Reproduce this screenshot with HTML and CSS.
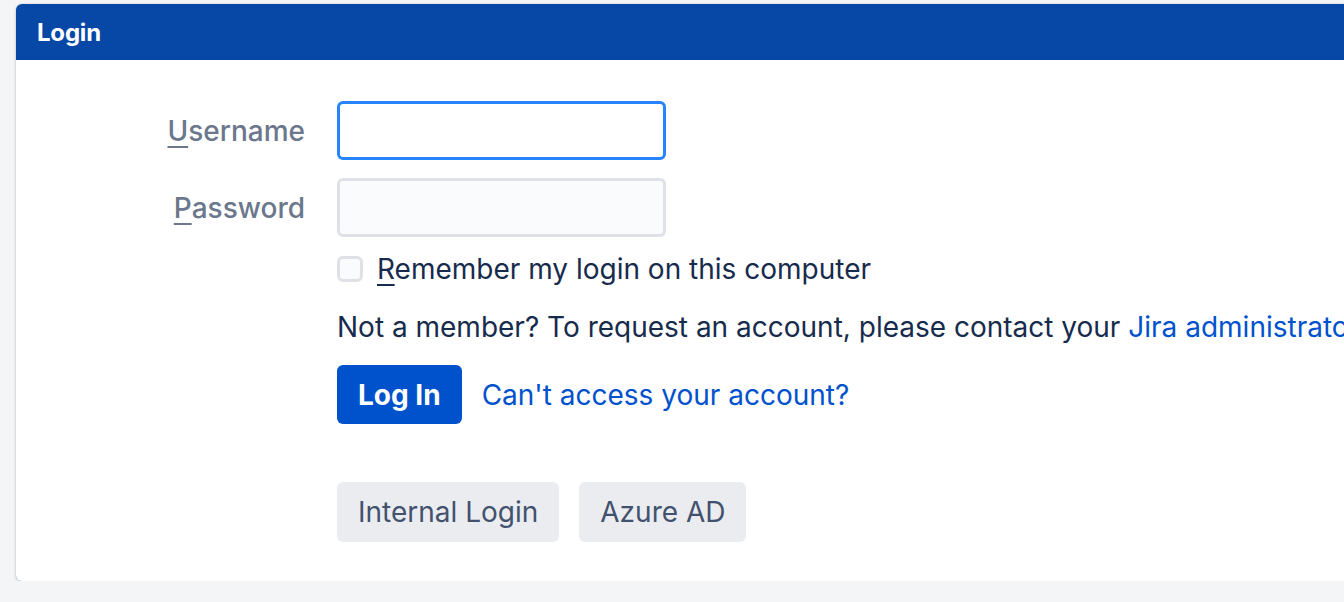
FILE: index.html
```html
<!DOCTYPE html>
<html lang="en">
<head>
<meta charset="utf-8">
<title>Login</title>
<link rel="stylesheet" href="styles.css">
</head>
<body>
<div class="page">
  <section class="card">
    <header class="card-header"><h1 class="card-title">Login</h1></header>
    <form class="login-form">
      <div class="row row-username">
        <label class="field-label" for="username"><span class="key">U</span>sername</label>
        <input class="text-input focused" id="username" type="text">
      </div>
      <div class="row row-password">
        <label class="field-label" for="password"><span class="key">P</span>assword</label>
        <input class="text-input muted" id="password" type="password">
      </div>
      <div class="row row-remember">
        <div class="field-label"></div>
        <label class="remember"><span class="checkbox"></span><span><span class="key">R</span>emember my login on this computer</span></label>
      </div>
      <div class="row row-note">
        <div class="field-label"></div>
        <p class="note">Not a member? To request an account, please contact your <a class="link" href="#">Jira administrators</a>.</p>
      </div>
      <div class="row row-actions">
        <div class="field-label"></div>
        <div class="actions">
          <button class="btn btn-primary" type="button">Log In</button>
          <a class="link forgot" href="#">Can't access your account?</a>
        </div>
      </div>
      <div class="row row-alt">
        <div class="field-label"></div>
        <div class="alt-buttons">
          <button class="btn btn-subtle" type="button">Internal Login</button>
          <button class="btn btn-subtle" type="button">Azure AD</button>
        </div>
      </div>
    </form>
  </section>
</div>
</body>
</html>
```

FILE: styles.css
```css
html, body {
  margin: 0;
  padding: 0;
  height: 100%;
  overflow: hidden;
  background: #f4f5f7;
}

body {
  font-family: Inter, "Noto Sans", "Liberation Sans", sans-serif;
  color: #172b4d;
}

.page {
  padding: 4px 0 0 16px;
  overflow: hidden;
}

.card {
  width: 1400px;
  background: #ffffff;
  border-radius: 6px;
  box-shadow: 0 1px 3px rgba(9, 30, 66, 0.22), 0 0 1px rgba(9, 30, 66, 0.35);
  overflow: hidden;
}

.card-header {
  height: 56px;
  background: #0747a6;
  display: flex;
  align-items: center;
  padding-left: 21px;
}

.card-title {
  margin: 0;
  color: #ffffff;
  font-size: 24px;
  font-weight: 700;
  letter-spacing: -0.2px;
}

.login-form {
  padding: 41px 0 39px 0;
  display: flex;
  flex-direction: column;
}

.row {
  display: flex;
  align-items: center;
  gap: 32px;
}

.field-label {
  flex: 0 0 289px;
  text-align: right;
  font-size: 28px;
  font-weight: 500;
  color: #6b778c;
}

.key {
  text-decoration: underline;
  text-underline-offset: 5px;
  text-decoration-thickness: 2px;
}

.text-input {
  box-sizing: border-box;
  width: 329px;
  height: 59px;
  border-radius: 6px;
  margin: 0;
  padding: 0 12px;
  font: inherit;
  outline: none;
}

.text-input.focused {
  border: 3px solid #2684ff;
  background: #ffffff;
}

.text-input.muted {
  border: 3px solid #dfe1e6;
  background: #fafbfc;
}

.row-password {
  margin-top: 18px;
}

.row-remember {
  margin-top: 18px;
}

.remember {
  display: flex;
  align-items: center;
  gap: 14px;
  font-size: 28px;
  color: #172b4d;
  line-height: 28px;
}

.checkbox {
  box-sizing: border-box;
  width: 26px;
  height: 26px;
  border: 3px solid #dfe1e6;
  border-radius: 6px;
  background: #fafbfc;
}

.row-note {
  margin-top: 27px;
}

.note {
  margin: 0;
  font-size: 28px;
  line-height: 34px;
  white-space: nowrap;
  color: #172b4d;
}

.link {
  color: #0052cc;
  text-decoration: none;
}

.row-actions {
  margin-top: 21px;
}

.actions {
  display: flex;
  align-items: center;
  gap: 20px;
}

.btn {
  border: none;
  border-radius: 6px;
  font-family: inherit;
  font-size: 28px;
  height: 59px;
  padding: 0 21px;
  margin: 0;
}

.btn-primary {
  background: #0052cc;
  color: #ffffff;
  font-weight: 700;
}

.forgot {
  font-size: 28px;
}

.row-alt {
  margin-top: 58px;
}

.alt-buttons {
  display: flex;
  gap: 20px;
}

.btn-subtle {
  background: #ebecf0;
  color: #42526e;
  height: 60px;
  padding: 0 21px;
}
```
